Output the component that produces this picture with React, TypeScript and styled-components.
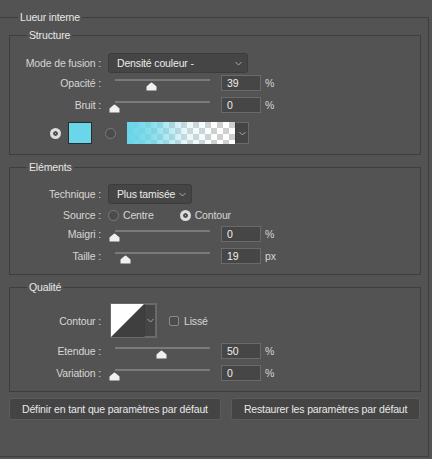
import React from "react";
import styled, { createGlobalStyle } from "styled-components";

const GlobalStyle = createGlobalStyle`
  body {
    margin: 0;
    background: #535353;
    font-family: "Liberation Sans", Arial, sans-serif;
    font-size: 10.5px;
    letter-spacing: -0.15px;
    color: #d6d6d6;
  }
`;

const Panel = styled.fieldset`
  box-sizing: border-box;
  width: 429px;
  min-width: 0;
  margin: 10px 0 0;
  padding: 4px 7px 36px 9px;
  border: 1px solid #3e3e3e;
  border-left: none;
`;

const Title = styled.legend`
  margin-left: 9px;
  padding: 0 2px;
  line-height: 14px;
  color: #e8e8e8;
`;

const Stack = styled.div`
  display: flex;
  flex-direction: column;
  gap: 5px;
`;

const Section = styled.fieldset<{ $pt: number }>`
  min-width: 0;
  margin: 0;
  padding: ${(p) => p.$pt}px 0 10px 0;
  border: 1px solid #3e3e3e;
`;

const SectionTitle = styled.legend`
  margin-left: 17px;
  padding: 0 2px;
  line-height: 14px;
  color: #e8e8e8;
`;

const Body = styled.div`
  display: flex;
  flex-direction: column;
  gap: 2px;
`;

const FieldRow = styled.div<{ $mt?: number; $h?: number }>`
  display: grid;
  grid-template-columns: 91px auto;
  column-gap: 7px;
  align-items: center;
  justify-content: start;
  margin-top: ${(p) => p.$mt ?? 0}px;
  height: ${(p) => (p.$h ? `${p.$h}px` : "auto")};
`;

const Label = styled.span`
  text-align: right;
  white-space: nowrap;
  line-height: 14px;
`;

const Control = styled.div`
  display: flex;
  align-items: center;
`;

const Dropdown = styled.div<{ $w: number }>`
  box-sizing: border-box;
  width: ${(p) => p.$w}px;
  height: 20px;
  display: flex;
  align-items: center;
  justify-content: space-between;
  padding: 0 5px 0 8px;
  background: #454545;
  border: 1px solid #3c3c3c;
  border-radius: 3px;
  color: #ececec;
  white-space: nowrap;
`;

const Chevron = styled.svg`
  width: 7px;
  height: 5px;
  flex: none;
`;

const Slider = styled.div`
  position: relative;
  width: 109px;
  height: 16px;
`;

const Track = styled.div`
  position: absolute;
  left: 7px;
  top: 4px;
  width: 95px;
  height: 2px;
  background: #7a7a7a;
`;

const Thumb = styled.svg`
  position: absolute;
  top: 7px;
  width: 11px;
  height: 9px;
`;

const NumberBox = styled.div`
  box-sizing: border-box;
  width: 40px;
  height: 16px;
  margin-left: 4px;
  padding-left: 5px;
  line-height: 14px;
  background: #464646;
  border: 1px solid #6a6a6a;
  color: #eeeeee;
`;

const Unit = styled.span`
  margin-left: 4px;
`;

const RadioDot = styled.span<{ $on?: boolean }>`
  box-sizing: border-box;
  width: 11px;
  height: 11px;
  border-radius: 50%;
  flex: none;
  background: ${(p) => (p.$on ? "#dcdcdc" : "#4b4b4b")};
  border: ${(p) => (p.$on ? "3.5px solid #dcdcdc" : "1px solid #7a7a7a")};
  box-shadow: ${(p) => (p.$on ? "inset 0 0 0 2px #4a4a4a" : "none")};
`;

const RadioOption = styled.label`
  display: flex;
  align-items: center;
  gap: 4px;
  line-height: 14px;
`;

const SourceGroup = styled.div`
  display: flex;
  align-items: center;
  gap: 26px;
`;

const ColourRow = styled.div`
  display: flex;
  align-items: center;
  height: 22px;
  margin-top: 7px;
  padding-left: 40px;
`;

const Swatch = styled.div<{ $color: string }>`
  box-sizing: border-box;
  width: 24px;
  height: 22px;
  margin: 0 13px 0 7px;
  background: ${(p) => p.$color};
  border: 1px solid #2c2c2c;
`;

const GradientPicker = styled.div`
  display: flex;
  height: 22px;
  margin-left: 11px;
`;

const GradientStrip = styled.div`
  width: 108px;
  height: 22px;
  background:
    linear-gradient(to right, rgba(103, 213, 232, 1) 0%, rgba(103, 213, 232, 0.75) 25%, rgba(190, 236, 245, 0.35) 55%, rgba(255, 255, 255, 0) 85%),
    repeating-conic-gradient(#cfcfcf 0% 25%, #ffffff 0% 50%) 0 0 / 12px 12px;
`;

const ArrowStrip = styled.div<{ $w: number; $h: number }>`
  box-sizing: border-box;
  width: ${(p) => p.$w}px;
  height: ${(p) => p.$h}px;
  display: flex;
  align-items: center;
  justify-content: center;
  background: #454545;
  border: 1px solid #6a6a6a;
  border-left: 1px solid #3c3c3c;
`;

const ContourPicker = styled.div`
  display: flex;
  margin-left: 2px;
  border: 1px solid #6a6a6a;
`;

const ContourImage = styled.svg`
  display: block;
  width: 33px;
  height: 33px;
`;

const CheckOption = styled.label`
  display: flex;
  align-items: center;
  gap: 5px;
  margin-left: 12px;
  line-height: 14px;
`;

const CheckBox = styled.span`
  box-sizing: border-box;
  width: 10px;
  height: 10px;
  border: 1px solid #8a8a8a;
  border-radius: 2px;
  background: #4c4c4c;
`;

const ButtonBar = styled.div`
  display: flex;
  gap: 10px;
  margin-top: 1px;
`;

const Button = styled.button`
  box-sizing: border-box;
  height: 22px;
  padding: 0 12px;
  background: #444444;
  border: 1px solid #5c5c5c;
  border-radius: 3px;
  color: #e8e8e8;
  font-family: "Liberation Sans", Arial, sans-serif;
  font-size: 10.5px;
  letter-spacing: -0.15px;
  white-space: nowrap;
`;

const ChevronIcon = () => (
  <Chevron viewBox="0 0 7 5">
    <path d="M0.5 1 L3.5 4 L6.5 1" fill="none" stroke="#a8a8a8" strokeWidth="1" />
  </Chevron>
);

interface ISlider {
  label: string;
  value: string;
  unit: string;
  pos: number;
  mt?: number;
}

function SliderField({ label, value, unit, pos, mt }: ISlider) {
  return (
    <FieldRow $mt={mt}>
      <Label>{label}</Label>
      <Control>
        <Slider>
          <Track />
          <Thumb viewBox="0 0 11 9" style={{ left: 0.5 + pos * 95 }}>
            <path d="M5.5 0.5 Q6 0.5 10.5 4.5 L10.5 8.5 L0.5 8.5 L0.5 4.5 Q5 0.5 5.5 0.5 Z" fill="#f0f0f0" />
          </Thumb>
        </Slider>
        <NumberBox>{value}</NumberBox>
        <Unit>{unit}</Unit>
      </Control>
    </FieldRow>
  );
}

export default function App() {
  return (
    <>
      <GlobalStyle />
      <Panel>
        <Title>Lueur interne</Title>
        <Stack>
          <Section $pt={11}>
            <SectionTitle>Structure</SectionTitle>
            <Body>
              <FieldRow>
                <Label>Mode de fusion :</Label>
                <Dropdown $w={140}>
                  Densité couleur -
                  <ChevronIcon />
                </Dropdown>
              </FieldRow>
              <SliderField label="Opacité :" value="39" unit="%" pos={0.39} />
              <SliderField label="Bruit :" value="0" unit="%" pos={0} mt={4} />
              <ColourRow>
                <RadioDot $on />
                <Swatch $color="#69d6e9" />
                <RadioDot />
                <GradientPicker>
                  <GradientStrip />
                  <ArrowStrip $w={14} $h={22}>
                    <ChevronIcon />
                  </ArrowStrip>
                </GradientPicker>
              </ColourRow>
            </Body>
          </Section>

          <Section $pt={10}>
            <SectionTitle>Eléments</SectionTitle>
            <Body>
              <FieldRow>
                <Label>Technique :</Label>
                <Dropdown $w={84}>
                  Plus tamisée
                  <ChevronIcon />
                </Dropdown>
              </FieldRow>
              <FieldRow $h={18}>
                <Label>Source :</Label>
                <SourceGroup>
                  <RadioOption>
                    <RadioDot />
                    Centre
                  </RadioOption>
                  <RadioOption>
                    <RadioDot $on />
                    Contour
                  </RadioOption>
                </SourceGroup>
              </FieldRow>
              <SliderField label="Maigri :" value="0" unit="%" pos={0} />
              <SliderField label="Taille :" value="19" unit="px" pos={0.126} mt={4} />
            </Body>
          </Section>

          <Section $pt={9}>
            <SectionTitle>Qualité</SectionTitle>
            <Body>
              <FieldRow>
                <Label>Contour :</Label>
                <Control>
                  <ContourPicker>
                    <ContourImage viewBox="0 0 33 33">
                      <rect width="33" height="33" fill="#3f3f3f" />
                      <polygon points="0,0 33,0 0,33" fill="#ffffff" />
                    </ContourImage>
                    <ArrowStrip $w={12} $h={33}>
                      <ChevronIcon />
                    </ArrowStrip>
                  </ContourPicker>
                  <CheckOption>
                    <CheckBox />
                    Lissé
                  </CheckOption>
                </Control>
              </FieldRow>
              <SliderField label="Etendue :" value="50" unit="%" pos={0.5} mt={3} />
              <SliderField label="Variation :" value="0" unit="%" pos={0} mt={4} />
            </Body>
          </Section>

          <ButtonBar>
            <Button>Définir en tant que paramètres par défaut</Button>
            <Button>Restaurer les paramètres par défaut</Button>
          </ButtonBar>
        </Stack>
      </Panel>
    </>
  );
}
